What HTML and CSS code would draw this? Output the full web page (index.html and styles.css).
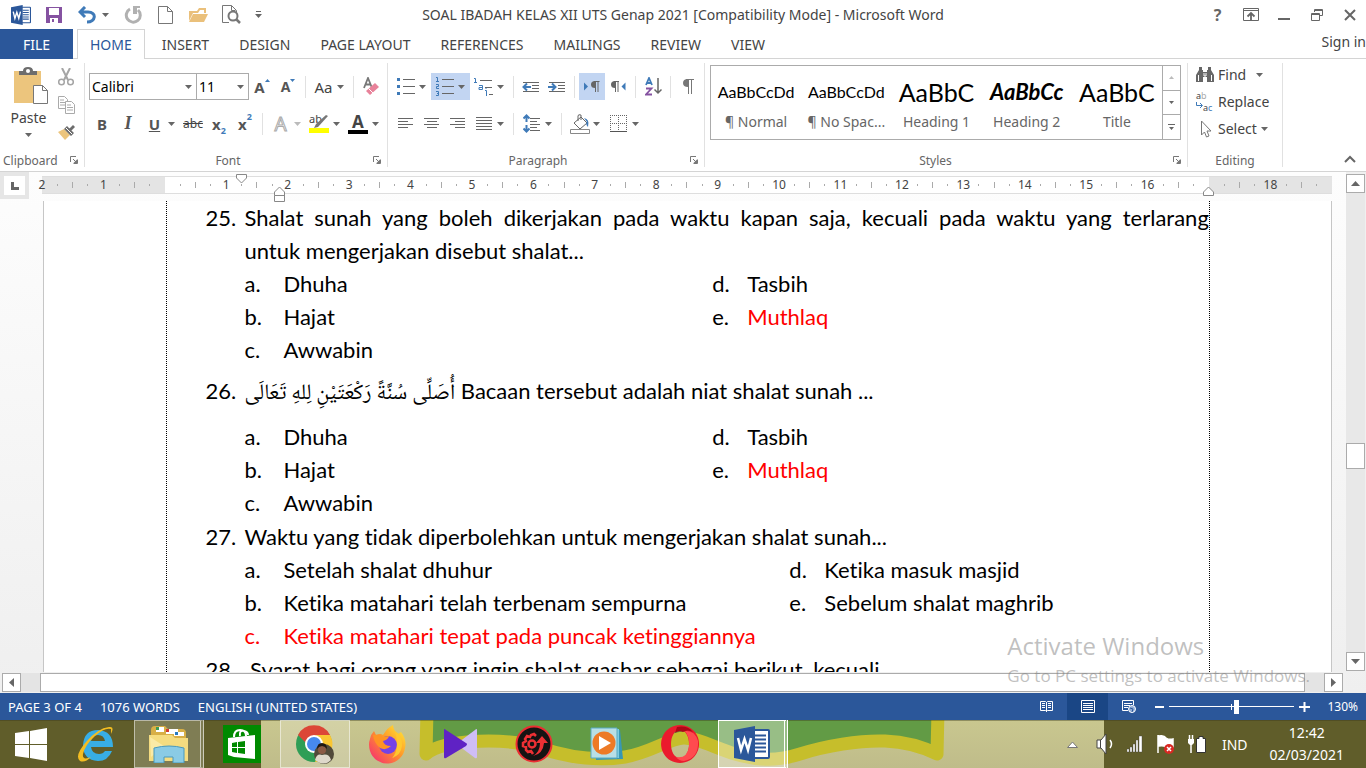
FILE: index.html
```html
<!DOCTYPE html>
<html lang="en">
  <head>
    <meta charset="UTF-8" />
    <meta name="viewport" content="width=device-width, initial-scale=1.0" />
    <title>SOAL IBADAH KELAS XII UTS Genap 2021 - Microsoft Word</title>
    <link rel="stylesheet" href="styles.css">
  </head>
  <body>
    <!-- Shared symbols -->
    <svg class="defs" width="0" height="0">
      <symbol id="caret" viewBox="0 0 7 4"><path d="M0 0h7L3.500 4z" fill="currentColor"/></symbol>
      <symbol id="launcher" viewBox="0 0 8 8"><path d="M.5 6V.5H6M3 3l3 3M7.500 3.500v4h-4" fill="none" stroke="#777"/><path d="M7 3.500V7H3.500z" fill="#777"/></symbol>
      <symbol id="word" viewBox="0 0 36 36">
        <rect x="19" y="4" width="16" height="28" rx="1" fill="#fff" stroke="#2b579a" stroke-width="2"/>
        <path d="M21 9.500h11M21 13.500h11M21 17.500h11M21 21.500h11M21 25.500h11" stroke="#2b579a" stroke-width="2"/>
        <path d="M0 4L21 0v36L0 32z" fill="#2b579a"/>
        <path d="M4 12l3 12 3.500-11L14 24l3-12" fill="none" stroke="#fff" stroke-width="2.500"/>
      </symbol>
    </svg>

    <!-- Title bar -->
    <header class="titlebar">
      <div class="quick">
        <button class="tb" aria-label="Word"><svg width="20" height="20"><use href="#word"/></svg></button>
        <button class="tb" aria-label="Save"><svg width="16" height="16"><path d="M0 0h16v16H0z" fill="#8552a1"/><path d="M3 1h10v7H3zM4 11h8v5H4z" fill="#fff"/><path d="M6 12h2v3H6z" fill="#8552a1"/></svg></button>
        <button class="tb tb-undo" aria-label="Undo"><svg width="18" height="18"><path d="M7 1L2 6l5 5M3 6h7c9 0 8 10-1 10" fill="none" stroke="#3f7ab8" stroke-width="3"/></svg><svg width="7" height="4" class="caret"><use href="#caret"/></svg></button>
        <button class="tb" aria-label="Repeat"><svg width="18" height="18"><path d="M6 3a7 7 0 1 0 8 1" fill="none" stroke="#b1b1b1" stroke-width="3"/><path d="M9 0h7v2h-3v6H9z" fill="#b1b1b1"/></svg></button>
        <button class="tb" aria-label="New"><svg width="16" height="18"><path d="M.5.5h9l5 5v12H.5zM9.500.5v5h5" fill="#fff" stroke="#777"/></svg></button>
        <button class="tb" aria-label="Open"><svg width="19" height="16"><path d="M0 14V4h8l2-3h7v5h-2V3h-4L9 6H4z" fill="#eac07b"/><path d="M4 7h15l-4 8H0z" fill="#eac07b"/></svg></button>
        <button class="tb" aria-label="Print preview"><svg width="19" height="19"><path d="M7 17.500H.5V.5h9l5 5v2M9.500.5v5h4" fill="none" stroke="#777"/><circle cx="11" cy="11" r="4.500" fill="#fff" stroke="#777" stroke-width="2"/><path d="M14 14l4 4" stroke="#777" stroke-width="2.500"/></svg></button>
        <button class="tb tb-small" aria-label="Customize"><svg width="7" height="8" class="caret"><path d="M1 0h5v1H1zM0 3h7L3.500 7z" fill="currentColor"/></svg></button>
      </div>
      <h1 class="doc-title">SOAL IBADAH KELAS XII UTS Genap 2021 [Compatibility Mode] - Microsoft Word</h1>
      <div class="window-buttons">
        <button class="tb help" aria-label="Help">?</button>
        <button class="tb" aria-label="Ribbon options"><svg width="16" height="13"><path d="M.5.5h15v12H.5zM0 2.500h16" fill="none" stroke="#666"/><path d="M8 12V5M4.500 8.500L8 5l3.500 3.500" fill="none" stroke="#666" stroke-width="1.800"/></svg></button>
        <button class="tb" aria-label="Minimize"><svg width="12" height="12"><path d="M0 9h12v2H0z" fill="#666"/></svg></button>
        <button class="tb" aria-label="Restore"><svg width="12" height="12"><path d="M3.500 3V.5h8v6H9M3 1.500h9M.5 4.500h8v7h-8zM0 5.500h9" fill="none" stroke="#666"/></svg></button>
        <button class="tb" aria-label="Close"><svg width="12" height="12"><path d="M1 1l10 10M11 1L1 11" stroke="#666" stroke-width="2"/></svg></button>
      </div>
    </header>

    <!-- Tabs -->
    <nav class="tabs">
      <button class="tab tab-file">FILE</button>
      <button class="tab tab-active">HOME</button>
      <button class="tab">INSERT</button>
      <button class="tab">DESIGN</button>
      <button class="tab">PAGE LAYOUT</button>
      <button class="tab">REFERENCES</button>
      <button class="tab">MAILINGS</button>
      <button class="tab">REVIEW</button>
      <button class="tab">VIEW</button>
      <a href="#" class="signin">Sign in</a>
    </nav>

    <!-- Ribbon -->
    <section class="ribbon">
      <div class="group group-clipboard">
        <div class="clipboard">
          <button class="paste">
            <svg width="35" height="38"><path d="M0 4h27v32H0z" fill="#ecc57d"/><path d="M5 8V4h4q0-4 5-4t5 4h4v4z" fill="#6d6d6d"/><circle cx="14" cy="4" r="2" fill="#fff"/><path d="M19.500 18.500h9l5 5v13h-14z" fill="#fff" stroke="#777"/><path d="M28.500 18.500v5h5" fill="none" stroke="#777"/></svg>
            <span>Paste</span>
            <svg width="7" height="4" class="caret"><use href="#caret"/></svg>
          </button>
          <div class="clip-side">
            <button class="tool-small" aria-label="Cut"><svg width="16" height="18"><path d="M4 0l6 12M12 0L6 12" stroke="#a5a5a5" stroke-width="2"/><circle cx="3.500" cy="14" r="2.800" fill="none" stroke="#a5a5a5" stroke-width="1.500"/><circle cx="12.500" cy="14" r="2.800" fill="none" stroke="#a5a5a5" stroke-width="1.500"/></svg></button>
            <button class="tool-small" aria-label="Copy"><svg width="17" height="18"><path d="M.5.5h6l3 3v9h-9zM2 4h4M2 6.500h5M2 9h5" fill="#fff" stroke="#aaa"/><path d="M7.500 5.500h6l3 3v9h-9zM9 9h4M9 11.500h6M9 14h6" fill="#fff" stroke="#aaa"/></svg></button>
            <button class="tool-small" aria-label="Format Painter"><svg width="17" height="16"><path d="M0 7l6-3 6 6-5 5z" fill="#ecc57d"/><path d="M6 4l3-3 7 7-3 3zM11 4l4-4 2 2-4 4z" fill="#6d6d6d"/><path d="M8 3l6 6" stroke="#fff"/></svg></button>
          </div>
        </div>
        <div class="group-name">Clipboard<svg width="8" height="8" class="launcher"><use href="#launcher"/></svg></div>
      </div>

      <div class="group group-font">
        <div class="tools">
          <div class="combo combo-font"><select aria-label="Font"><option>Calibri</option></select><svg width="7" height="4" class="caret"><use href="#caret"/></svg></div>
          <div class="combo combo-size"><select aria-label="Font size"><option>11</option></select><svg width="7" height="4" class="caret"><use href="#caret"/></svg></div>
          <button class="tool glyph" aria-label="Grow font">A<svg width="5" height="18"><path d="M0 4h5L2.500 1z" fill="#3f7ab8"/></svg></button>
          <button class="tool glyph glyph-small" aria-label="Shrink font">A<svg width="5" height="18"><path d="M0 1h5L2.500 4z" fill="#3f7ab8"/></svg></button>
          <i class="sep"></i>
          <button class="split" aria-label="Change case"><span class="pic case">Aa</span><svg width="7" height="4" class="caret"><use href="#caret"/></svg></button>
          <i class="sep"></i>
          <button class="tool" aria-label="Clear formatting"><svg width="17" height="19"><path d="M1 11L5 1l4 10M2.500 7.500h5" fill="none" stroke="#777" stroke-width="1.800"/><path d="M3 14l9-8 4 4-9 8z" fill="#e8829a"/><path d="M5.500 11.500l4.500 4.500" stroke="#fff"/></svg></button>
        </div>
        <div class="tools">
          <button class="tool glyph" aria-label="Bold">B</button>
          <button class="tool glyph italic" aria-label="Italic">I</button>
          <button class="split" aria-label="Underline"><span class="pic glyph underline">U</span><svg width="7" height="4" class="caret"><use href="#caret"/></svg></button>
          <button class="tool strike" aria-label="Strikethrough">abc</button>
          <button class="tool glyph" aria-label="Subscript">x<sub>2</sub></button>
          <button class="tool glyph" aria-label="Superscript">x<sup>2</sup></button>
          <i class="sep"></i>
          <button class="split faded" aria-label="Text effects"><span class="pic effect">A</span><svg width="7" height="4" class="caret"><use href="#caret"/></svg></button>
          <button class="split" aria-label="Highlight"><span class="pic marker">ab<svg width="20" height="19"><path d="M19 2L9 13l-4 1 2-4L17 1z" fill="#777"/><path d="M0 14h20v5H0z" fill="#ff0"/></svg></span><svg width="7" height="4" class="caret"><use href="#caret"/></svg></button>
          <button class="split" aria-label="Font color"><span class="pic color">A</span><svg width="7" height="4" class="caret"><use href="#caret"/></svg></button>
        </div>
        <div class="group-name">Font<svg width="8" height="8" class="launcher"><use href="#launcher"/></svg></div>
      </div>

      <div class="group group-paragraph">
        <div class="tools">
          <button class="split" aria-label="Bullets"><span class="pic"><svg width="18" height="17"><path d="M6 1.500h12M6 8.500h12M6 15.500h12" stroke="#666"/><path d="M0 0h3v3H0zM0 7h3v3H0zM0 14h3v3H0z" fill="#3f7ab8"/></svg></span><svg width="7" height="4" class="caret"><use href="#caret"/></svg></button>
          <button class="split on" aria-label="Numbering"><span class="pic"><svg width="18" height="19"><path d="M6 2.500h12M6 9.500h12M6 16.500h12" stroke="#666"/><path d="M0 .5h1.500V5M0 4.500h3M0 7.500h2.500v2H.5v2H3M0 14.500h2.500v4H0M1 16.500h1.500" fill="none" stroke="#3f7ab8"/></svg></span><svg width="7" height="4" class="caret"><use href="#caret"/></svg></button>
          <button class="split" aria-label="Multilevel list"><span class="pic"><svg width="19" height="18"><path d="M6 2.500h12M11 9.500h7M15 16.500h4" stroke="#666"/><path d="M0 .5h1.500V5M0 4.500h3M5 7.500h3.500v4H5v-2h3M11 12.500h1.500V18M12 10v1" fill="none" stroke="#3f7ab8"/></svg></span><svg width="7" height="4" class="caret"><use href="#caret"/></svg></button>
          <i class="sep"></i>
          <button class="tool" aria-label="Decrease indent"><svg width="18" height="12"><path d="M1 1.500h16M10 4.500h7M10 7.500h7M1 10.500h16" stroke="#666"/><path d="M9 6H2M5 2.500L1.500 6 5 9.500" fill="none" stroke="#3f7ab8" stroke-width="2"/></svg></button>
          <button class="tool" aria-label="Increase indent"><svg width="18" height="12"><path d="M1 1.500h16M10 4.500h7M10 7.500h7M1 10.500h16" stroke="#666"/><path d="M0 6h7M4 2.500L7.500 6 4 9.500" fill="none" stroke="#3f7ab8" stroke-width="2"/></svg></button>
          <i class="sep"></i>
          <button class="tool on" aria-label="Left-to-right"><svg width="16" height="12"><path d="M0 1.500v8L4 5.500z" fill="#3f7ab8"/><path d="M15.500.5H10M11.500 1v10M14 1v10" fill="none" stroke="#666"/><path d="M11 0v7Q7 7 7 3.500T11 0z" fill="#666"/></svg></button>
          <button class="tool" aria-label="Right-to-left"><svg width="16" height="12"><path d="M15.500 1.500v8l-4-4z" fill="#3f7ab8"/><path d="M9 .5H4M5.500 1v10M8 1v10" fill="none" stroke="#666"/><path d="M5 0v7Q1 7 1 3.500T5 0z" fill="#666"/></svg></button>
          <i class="sep"></i>
          <button class="tool" aria-label="Sort"><svg width="17" height="19"><path d="M1 8L4 1l3 7M2 6h4" fill="none" stroke="#3f7ab8" stroke-width="1.800"/><path d="M1 11.500h5.500L1 17.500h6" fill="none" stroke="#8552a1" stroke-width="1.800"/><path d="M13 1v15M9.500 12.500L13 16l3.500-3.500" fill="none" stroke="#666" stroke-width="1.500"/></svg></button>
          <i class="sep"></i>
          <button class="tool" aria-label="Show marks"><svg width="12" height="15"><path d="M12 .5H4M6.500 1v14M9.500 1v14" fill="none" stroke="#777"/><path d="M6 0v8Q1 8 1 4t5-4z" fill="#777"/></svg></button>
        </div>
        <div class="tools">
          <button class="tool" aria-label="Align left"><svg width="15" height="11"><path d="M0 .5h15M0 3.500h10M0 6.500h15M0 9.500h10" stroke="#666"/></svg></button>
          <button class="tool" aria-label="Center"><svg width="15" height="11"><path d="M0 .5h15M3 3.500h10M0 6.500h15M3 9.500h10" stroke="#666"/></svg></button>
          <button class="tool" aria-label="Align right"><svg width="15" height="11"><path d="M0 .5h15M5 3.500h10M0 6.500h15M5 9.500h10" stroke="#666"/></svg></button>
          <button class="split" aria-label="Justify"><span class="pic"><svg width="16" height="14"><path d="M0 .5h16M0 3.500h16M0 6.500h16M0 9.500h16M0 12.500h16" stroke="#666"/></svg></span><svg width="7" height="4" class="caret"><use href="#caret"/></svg></button>
          <i class="sep"></i>
          <button class="split" aria-label="Line spacing"><span class="pic"><svg width="18" height="19"><path d="M7 4.500h10M7 7.500h7M7 10.500h10M7 13.500h7M7 16.500h10" stroke="#666"/><path d="M3.500 8V2M.5 4.500l3-3 3 3M3.500 11v6M.5 14.500l3 3 3-3" fill="none" stroke="#3f7ab8" stroke-width="2"/></svg></span><svg width="7" height="4" class="caret"><use href="#caret"/></svg></button>
          <i class="sep"></i>
          <button class="split" aria-label="Shading"><span class="pic"><svg width="20" height="20"><path d="M4 9l7-6 6 6-7 6zM8 7V2q0-2 3-1v5" fill="none" stroke="#666"/><path d="M14 4q6 1 4 9-3-3-1-5z" fill="#3f7ab8"/><path d="M.5 15.500h19v4H.5z" fill="#fff" stroke="#888"/></svg></span><svg width="7" height="4" class="caret"><use href="#caret"/></svg></button>
          <button class="split" aria-label="Borders"><span class="pic"><svg width="17" height="17"><path d="M0 .5h17M0 8.500h17M.5 0v16M8.500 0v16M16.500 0v16" stroke="#666" stroke-dasharray="1 1"/><path d="M0 16.500h17" stroke="#555"/></svg></span><svg width="7" height="4" class="caret"><use href="#caret"/></svg></button>
        </div>
        <div class="group-name">Paragraph<svg width="8" height="8" class="launcher"><use href="#launcher"/></svg></div>
      </div>

      <div class="group group-styles">
        <div class="gallery">
          <button class="style-item"><span class="sample">AaBbCcDd</span><span>¶ Normal</span></button>
          <button class="style-item"><span class="sample">AaBbCcDd</span><span>¶ No Spac...</span></button>
          <button class="style-item"><span class="sample sample-big">AaBbC</span><span>Heading 1</span></button>
          <button class="style-item"><span class="sample sample-italic">AaBbCc</span><span>Heading 2</span></button>
          <button class="style-item"><span class="sample sample-big">AaBbC</span><span>Title</span></button>
          <div class="gallery-nav">
            <button aria-label="Previous"><svg width="5" height="3"><path d="M0 3h5L2.500 0z" fill="#bbb"/></svg></button>
            <button aria-label="Next"><svg width="5" height="3"><path d="M0 0h5L2.500 3z" fill="#666"/></svg></button>
            <button aria-label="More"><svg width="7" height="6"><path d="M0 0h7v1H0zM1 3h5L3.500 6z" fill="#666"/></svg></button>
          </div>
        </div>
        <div class="group-name">Styles<svg width="8" height="8" class="launcher"><use href="#launcher"/></svg></div>
      </div>

      <div class="group group-editing">
        <div class="edit-list">
          <button class="edit"><svg width="18" height="16"><path d="M0 15V8l3-5V0h3v3h1v12zM18 15V8l-3-5V0h-3v3h-1v12zM7 5h4v5H7z" fill="#666"/><path d="M2.500 8v6M15.500 8v6M8 6v3h2V6" stroke="#fff" fill="none"/></svg>Find<svg width="7" height="4" class="caret caret-far"><use href="#caret"/></svg></button>
          <button class="edit"><span class="replace-pic"><span>a<i>b</i></span><span class="replace-to"><svg width="7" height="7"><path d="M.5 0v3.500H6M4 1l2.500 2.500L4 6" fill="none" stroke="#3f7ab8"/></svg>a<b>c</b></span></span>Replace</button>
          <button class="edit"><svg width="18" height="18"><path d="M5.500 1v14l3-3 2 5 2.500-1-2-5h4z" fill="#fff" stroke="#777"/></svg>Select<svg width="7" height="4" class="caret"><use href="#caret"/></svg></button>
        </div>
        <div class="group-name">Editing</div>
      </div>
      <button class="collapse" aria-label="Collapse ribbon"><svg width="12" height="8"><path d="M1 7l5-5 5 5" fill="none" stroke="#666" stroke-width="2"/></svg></button>
    </section>

    <!-- Document area -->
    <main class="workspace">
      <div class="editor">
        <div class="ruler-row">
          <button class="tab-stop" aria-label="Tab stop"><svg width="8" height="8"><path d="M1.500 0v6.500H8" fill="none" stroke="#666" stroke-width="3"/></svg></button>
          <div class="ruler">
            <div class="cm off"><span>2</span></div><div class="cm off"><span>1</span></div>
            <div class="cm"></div><div class="cm"><span>1</span></div><div class="cm"><span>2</span></div><div class="cm"><span>3</span></div>
            <div class="cm"><span>4</span></div><div class="cm"><span>5</span></div><div class="cm"><span>6</span></div><div class="cm"><span>7</span></div>
            <div class="cm"><span>8</span></div><div class="cm"><span>9</span></div><div class="cm"><span>10</span></div><div class="cm"><span>11</span></div>
            <div class="cm"><span>12</span></div><div class="cm"><span>13</span></div><div class="cm"><span>14</span></div><div class="cm"><span>15</span></div>
            <div class="cm"><span>16</span></div><div class="cm off"></div><div class="cm off"><span>18</span></div>
            <svg class="mark mark-first" width="11" height="10"><path d="M.5.5h10V4l-5 5-5-5z" fill="#fff" stroke="#888"/></svg>
            <svg class="mark mark-left" width="11" height="16"><path d="M.5 9.500V6l5-5 5 5v9.500H.5zM.5 9.500h10" fill="#fff" stroke="#888"/></svg>
            <svg class="mark mark-right" width="11" height="10"><path d="M.5 9.500V6l5-5 5 5v3.500z" fill="#fff" stroke="#888"/></svg>
          </div>
        </div>
        <div class="canvas">
          <article class="page">
            <div class="page-text">
              <section class="question">
                <span class="number">25.</span>
                <p class="stem"><span class="full-line">Shalat sunah yang boleh dikerjakan pada waktu kapan saja, kecuali pada waktu yang terlarang</span> untuk mengerjakan disebut shalat...</p>
                <ul class="answers">
                  <li><span>a.</span>Dhuha</li><li><span>b.</span>Hajat</li><li><span>c.</span>Awwabin</li>
                  <li><span>d.</span>Tasbih</li><li><span>e.</span><mark>Muthlaq</mark></li>
                </ul>
              </section>
              <section class="question">
                <span class="number number-arabic">26.</span>
                <p class="stem stem-arabic"><bdo lang="ar" dir="rtl">أُصَلِّى سُنَّةً رَكْعَتَيْنِ لِلهِ تَعَالَى</bdo> Bacaan tersebut adalah niat shalat sunah ...</p>
                <ul class="answers">
                  <li><span>a.</span>Dhuha</li><li><span>b.</span>Hajat</li><li><span>c.</span>Awwabin</li>
                  <li><span>d.</span>Tasbih</li><li><span>e.</span><mark>Muthlaq</mark></li>
                </ul>
              </section>
              <section class="question">
                <span class="number">27.</span>
                <p class="stem">Waktu yang tidak diperbolehkan untuk mengerjakan shalat sunah...</p>
                <ul class="answers answers-wide">
                  <li><span>a.</span>Setelah shalat dhuhur</li><li><span>b.</span>Ketika matahari telah terbenam sempurna</li>
                  <li class="key"><span>c.</span>Ketika matahari tepat pada puncak ketinggiannya</li>
                  <li><span>d.</span>Ketika masuk masjid</li><li><span>e.</span>Sebelum shalat maghrib</li>
                </ul>
              </section>
              <section class="question">
                <span class="number">28.</span>
                <p class="stem">&nbsp;Syarat bagi orang yang ingin shalat qashar sebagai berikut, kecuali...</p>
              </section>
            </div>
          </article>
        </div>
      </div>
      <div class="vscroll">
        <button aria-label="Scroll up"><svg width="9" height="5"><path d="M0 5h9L4.500 0z" fill="#666"/></svg></button>
        <div class="vtrack"><div class="vthumb"></div></div>
        <button aria-label="Scroll down"><svg width="9" height="5"><path d="M0 0h9L4.500 5z" fill="#666"/></svg></button>
      </div>
      <div class="hscroll">
        <button aria-label="Scroll left"><svg width="5" height="9"><path d="M5 0v9L0 4.500z" fill="#666"/></svg></button>
        <div class="htrack"><div class="hthumb"></div></div>
        <button aria-label="Scroll right"><svg width="5" height="9"><path d="M0 0v9l5-4.500z" fill="#666"/></svg></button>
      </div>
      <div class="watermark"><strong>Activate Windows</strong><span>Go to PC settings to activate Windows.</span></div>
    </main>

    <!-- Status bar -->
    <footer class="status">
      <span>PAGE 3 OF 4</span>
      <span>1076 WORDS</span>
      <span>ENGLISH (UNITED STATES)</span>
      <div class="views">
        <button class="view" aria-label="Read mode"><svg width="13" height="13"><path d="M.5 1.500h5l1 1 1-1h5v9h-5l-1 1-1-1h-5zM6.500 2v10M2 3.500h3M2 5.500h3M2 7.500h3M8 3.500h3M8 5.500h3M8 7.500h3" fill="none" stroke="#fff"/></svg></button>
        <button class="view view-on" aria-label="Print layout"><svg width="14" height="13"><path d="M.5.5h13v12H.5zM2 3.500h10M2 5.500h10M2 7.500h10M2 9.500h10" fill="none" stroke="#fff"/></svg></button>
        <button class="view" aria-label="Web layout"><svg width="14" height="13"><path d="M6 10.500H.5V.5h11V5M2 3.500h8M2 5.500h6M2 7.500h4" fill="none" stroke="#fff"/><circle cx="10" cy="9" r="3.500" fill="#8fabd6" stroke="#fff"/><path d="M8 8l3 1-1 3" stroke="#2b579a" fill="none"/></svg></button>
        <button class="zoom-btn" aria-label="Zoom out"><svg width="9" height="10"><path d="M0 5h9" stroke="#fff" stroke-width="2"/></svg></button>
        <input class="zoom" type="range" min="0" max="100" value="54" aria-label="Zoom">
        <button class="zoom-btn" aria-label="Zoom in"><svg width="11" height="10"><path d="M0 5h11M5.500 0v10" stroke="#fff" stroke-width="2"/></svg></button>
        <span class="percent">130%</span>
      </div>
    </footer>

    <!-- Taskbar -->
    <div class="taskbar">
      <svg class="wallpaper" viewBox="0 0 1366 48" preserveAspectRatio="none">
        <defs><linearGradient id="sand" x2="0" y2="1"><stop offset="0" stop-color="#c9c78f"/><stop offset="1" stop-color="#bfbc8a"/></linearGradient></defs>
        <path d="M0 0h1366v48H0z" fill="#605d2a"/>
        <path d="M261 0h843v48H261z" fill="url(#sand)"/>
        <path d="M427-10L426 34C445 18 510 18 540 28S600 41 625 37 670 18 684 18 715 28 735 34 775 42 800 34 860 20 885 21 925 28 937 34L938-10z" fill="#629b45" stroke="#c6be2b" stroke-width="13" stroke-linejoin="round"/>
        <path d="M0 .5h1366" stroke="#3b3a1c" opacity=".4"/>
      </svg>
      <button class="start" aria-label="Start"><svg width="32" height="33"><path d="M0 5l14-2v13H0zM15 3l17-3v16H15zM0 17h14v13L0 28zM15 17h17v16l-17-3z" fill="#fff"/></svg></button>
      <button class="app" aria-label="Internet Explorer"><svg width="40" height="38"><path d="M37 22H15q1 7 8 7 4 0 6-3h7q-4 10-14 10Q7 35 7 20 8 5 22 5q15 1 15 17zM15 16h14q-1-6-7-6t-7 6z" fill="#38aee5"/><path d="M35 9Q39 1 33 2 22 3 10 17T4 36q5 2 11-4-9 4-8-3Q9 20 19 11T35 4z" fill="#f3bd22"/></svg></button>
      <button class="app open stacked" aria-label="File Explorer"><svg width="40" height="38"><path d="M3 5q0-4 4-4h10l3 3h14q4 0 4 4v26H3z" fill="#d8af46"/><path d="M8 2h8v5H8zM18 4h12v5H18zM26 7h10v4H26z" fill="#fff"/><path d="M8 2h3v3H8z" fill="#3b9b55"/><path d="M18 4h3v3h-3z" fill="#d53d33"/><path d="M27 7h3v3h-3z" fill="#287bc1"/><path d="M1 10h23l3 3h13v23H1z" fill="#f5dc80"/><path d="M2 12l14 9L3 32z" fill="#fff4bf" opacity=".6"/><path d="M6 23q15-4 30 0v15H25v-6H16v6H6z" fill="#8acbe5" stroke="#4999bd"/></svg></button>
      <button class="app app-store" aria-label="Store"><svg width="38" height="38"><path d="M0 0h38v38H0z" fill="#008a00"/><path d="M5 13l27-3v24l-21-2-6-2z" fill="#fff"/><path d="M11 12q0-7 6-7t6 6M17 11q-1-6 4-5 4 1 4 4" fill="none" stroke="#fff" stroke-width="2"/><path d="M9 18l5-1v5H9zM15 17l7-1v6h-7zM9 23h5v5l-5-1zM15 23h7v6l-7-1z" fill="#008a00"/></svg></button>
      <button class="app open" aria-label="Chrome"><svg width="40" height="40"><circle cx="19" cy="20" r="18" fill="#2f9e56"/><path d="M3 11A18 18 0 0 1 35 11L27 20H12z" fill="#dc4637"/><path d="M20 11h15A18 18 0 0 1 20 38L27 23z" fill="#f9c633"/><circle cx="19" cy="20" r="9" fill="#fff"/><circle cx="19" cy="20" r="7" fill="#4789ef"/><circle cx="29" cy="30" r="10" fill="#514a3a"/><circle cx="27" cy="26" r="4" fill="#8a5a45"/><path d="M22 25q0-6 5-6t5 6q-2-3-5-3t-5 3z" fill="#1f1712"/><path d="M20 36q2-7 7-5 7-2 9 5-7 7-16 0z" fill="#ded8ca"/></svg></button>
      <button class="app" aria-label="Firefox"><svg width="40" height="40"><defs><linearGradient id="fox" x1="1" x2="0" y2="1"><stop offset="0" stop-color="#fff13a"/><stop offset=".45" stop-color="#ff9928"/><stop offset="1" stop-color="#f5207b"/></linearGradient></defs><path d="M2 15q1-5 4-8l2 4q4-2 7 0 5-8 10-10 0 5 5 9l3-2q6 8 4 16a18 18 0 0 1-35 3Q0 20 2 15z" fill="url(#fox)"/><circle cx="20" cy="21" r="9" fill="#7542e5"/><path d="M5 11q6-1 10 2l6-1q-1 4-6 5 1 5 8 5-5 5-11 2-6-5-7-13z" fill="#ff9423"/><path d="M27 7q8 5 7 15-1 9-10 12 8-8 3-27z" fill="#ffc82f"/></svg></button>
      <button class="app" aria-label="Media player"><svg width="36" height="30"><path d="M34 1v27q0 2-2 1L16 17q-2-2 0-4L32 1q2-2 2 0z" fill="#cfbdf6"/><path d="M1 1v27q0 2 2 1l20-12q2-2 0-3L3 1Q1-1 1 1z" fill="#5f22c4"/></svg></button>
      <button class="app" aria-label="Driver Booster"><svg width="38" height="38"><circle cx="19" cy="19" r="17.500" fill="#151313" stroke="#ec2d32" stroke-width="2"/><path d="M21 11l-2-2-3 1-1 2-3-1-2 3 1 2-3 2v3l3 1 0 3 2 2 3-1 2 3" fill="none" stroke="#ed3034" stroke-width="2.500"/><circle cx="17" cy="19" r="3.500" fill="none" stroke="#ed3034" stroke-width="2.500"/><path d="M18 31q7-4 7-13h-4l6-7 6 7h-4q-1 11-11 13z" fill="#ed3034"/></svg></button>
      <button class="app" aria-label="Windows Media Player"><svg width="34" height="34"><path d="M5 1l25 2 3 29-27 1z" fill="#3897b5"/><path d="M3 2h26v29H3z" fill="#7dcbe0"/><path d="M1 1h26v30H1z" fill="#b8dfe6" stroke="#59aac1"/><circle cx="14" cy="16" r="11.500" fill="#ed7a26"/><path d="M9 9v14l12-7z" fill="#fff"/></svg></button>
      <button class="app" aria-label="Opera"><svg width="40" height="40"><path fill-rule="evenodd" d="M20 1a19 19 0 1 0 .1 0zm0 5c6 0 9 7 9 14s-3 14-9 14-9-7-9-14 3-14 9-14z" fill="#eb1b2d"/><path d="M25 7q10-1 13 10 1 17-14 20-5 0-8-4 11 2 13-10 1-10-4-16z" fill="#ff4b4f"/><path d="M17 3q10-2 16 5-6-3-10 0-4-2-8 1z" fill="#ad0817"/></svg></button>
      <button class="app open stacked app-word" aria-label="Word"><svg width="36" height="36"><use href="#word"/></svg></button>
      <div class="tray">
        <button class="tray-more" aria-label="Hidden icons"><svg width="11" height="7"><path d="M.5 6.500L5.500 1l5 5.500z" fill="#fff" stroke="#777"/></svg></button>
        <svg width="18" height="20"><path d="M1 6h4l5-6v20l-5-6H1z" fill="#fff" stroke="#444"/><path d="M4.500 6v8" stroke="#444"/><path d="M14 6q3 4 0 8" fill="none" stroke="#fff" stroke-width="1.500"/></svg>
        <svg width="16" height="18"><path d="M0 14h2v3H0zM3 12h2v5H3zM6 9h2v8H6zM9 5h2v12H9zM12 1h3v16h-3z" fill="#fff" stroke="#444" stroke-width=".4"/></svg>
        <svg width="19" height="19"><path d="M2 0v18M3 1q5-1 7 2 3 2 7 1v8q-5 2-7 0-3-2-7-1z" fill="#fff" stroke="#fff" stroke-width="1.500"/><circle cx="13" cy="14" r="5" fill="#d92822"/><path d="M11 12l4 4M15 12l-4 4" stroke="#fff" stroke-width="1.500"/></svg>
        <svg width="18" height="19"><path d="M1.500 0v4M4.500 0v4M3 9v9" stroke="#fff" stroke-width="1.500"/><path d="M0 4h6v4L4 10H2L0 8z" fill="#fff"/><path d="M8.500 3.500H11v-2h4v2h2.500v14h-9z" fill="#fff" stroke="#333"/></svg>
        <button class="lang">IND</button>
        <button class="clock"><span>12:42</span><span>02/03/2021</span></button>
      </div>
    </div>
  </body>
</html>
```
FILE: styles.css
```css
* {
  box-sizing: border-box;
}

body {
  margin: 0;
  height: 100vh;
  display: flex;
  flex-direction: column;
  overflow: hidden;
  font-family: "Noto Sans", "Open Sans", sans-serif;
  font-size: 14px;
  color: #444;
  background: #fff;
}

button {
  font: inherit;
  color: inherit;
  padding: 0;
  border: 0;
  background: none;
}

svg {
  display: block;
  flex: none;
}

.defs {
  position: absolute;
}

.caret {
  color: #666;
}

/* Title bar */
.titlebar {
  display: grid;
  grid-template-columns: 1fr auto 1fr;
  align-items: center;
  height: 29px;
  flex: none;
}

.quick,
.window-buttons {
  display: flex;
  align-items: center;
}

.quick {
  padding-left: 4px;
}

.window-buttons {
  justify-content: flex-end;
}

.tb {
  display: flex;
  align-items: center;
  justify-content: center;
  width: 33px;
  height: 27px;
}

.tb-undo {
  width: 46px;
  gap: 6px;
}

.tb-small {
  width: 20px;
}

.help {
  font-size: 16px;
  font-weight: bold;
  color: #666;
}

.doc-title {
  margin: 0;
  font-size: 14px;
  font-weight: normal;
}

/* Tabs */
.tabs {
  display: flex;
  height: 30px;
  flex: none;
  border-bottom: 1px solid #d4d4d4;
}

.tab {
  padding: 0 15px;
  height: 30px;
}

.tab-file {
  width: 73px;
  margin-right: 4px;
  color: #fff;
  background: #2b579a;
}

.tab-active {
  margin-right: 2px;
  color: #2b579a;
  padding: 0 12px;
  background: #fff;
  border: 1px solid #d4d4d4;
  border-bottom: 0;
}

.signin {
  margin-left: auto;
  padding-top: 3px;
  color: #444;
  text-decoration: none;
}

/* Ribbon */
.ribbon {
  display: flex;
  height: 113px;
  flex: none;
  padding: 4px 0;
  border-bottom: 1px solid #d4d4d4;
}

.group {
  position: relative;
  display: flex;
  flex-direction: column;
  border-right: 1px solid #e1e1e1;
}

.group-name {
  display: flex;
  align-items: center;
  justify-content: center;
  height: 14px;
  margin-top: auto;
  padding-right: 20px;
  font-size: 12px;
  color: #666;
}

.launcher {
  position: absolute;
  right: 6px;
  bottom: 3px;
}

.group-clipboard {
  width: 85px;
}

.group-clipboard .group-name {
  justify-content: flex-start;
  padding: 0 0 0 3px;
}

.clipboard {
  display: flex;
}

.paste {
  display: flex;
  flex-direction: column;
  align-items: center;
  width: 57px;
  padding: 4px 0 0 6px;
}

.paste span {
  margin: 3px 6px 6px 0;
}

.paste .caret {
  margin-right: 6px;
}

.clip-side {
  display: flex;
  flex-direction: column;
}

.tool-small {
  display: flex;
  align-items: center;
  justify-content: center;
  width: 18px;
  height: 28px;
}

.group-font {
  width: 303px;
  padding: 10px 0 0 4px;
}

.tools {
  display: flex;
  align-items: center;
  height: 27px;
  margin-bottom: 10px;
}

.tool {
  display: flex;
  align-items: center;
  justify-content: center;
  width: 26px;
  height: 27px;
}

.split {
  display: flex;
  align-items: center;
  width: 39px;
  height: 27px;
}

.pic {
  position: relative;
  display: flex;
  align-items: center;
  justify-content: center;
  width: 27px;
}

.on {
  background: #c2d5f2;
}

.sep {
  width: 1px;
  height: 22px;
  margin: 0 4px;
  background: #e1e1e1;
}

.combo {
  display: flex;
  align-items: center;
  height: 27px;
  padding-right: 4px;
  border: 1px solid #ababab;
}

.combo select {
  flex: 1;
  min-width: 0;
  padding: 0 2px;
  border: 0;
  appearance: none;
  background: none;
  font: inherit;
  color: #000;
}

.combo-font {
  width: 108px;
}

.combo-size {
  width: 52px;
  border-left: 0;
}

.glyph {
  font-size: 15px;
  font-weight: bold;
  color: #555;
}

.glyph-small {
  font-size: 14px;
}

.italic {
  font-family: "Liberation Serif", serif;
  font-size: 18px;
  font-style: italic;
}

.underline {
  text-decoration: underline;
}

.glyph sub,
.glyph sup {
  font-size: 9px;
  color: #3f7ab8;
}

.glyph sub {
  align-self: flex-end;
}

.glyph sup {
  align-self: flex-start;
}

.strike {
  font-size: 12px;
  text-decoration: line-through;
}

.case {
  font-size: 15px;
}

.effect {
  font-size: 19px;
  color: #fff;
  -webkit-text-stroke: 1px #aaa;
}

.faded .caret {
  color: #bbb;
}

.marker {
  height: 20px;
  align-items: flex-start;
  justify-content: flex-start;
  padding-left: 3px;
  font-size: 11px;
  line-height: 9px;
}

.marker svg {
  position: absolute;
  left: 3px;
  top: 0;
}

.color {
  width: 20px;
  height: 20px;
  margin: 0 4px 0 3px;
  border-bottom: 4px solid #000;
  font-size: 17px;
  font-weight: bold;
  line-height: 16px;
}

.group-paragraph {
  width: 317px;
  padding: 10px 0 0 4px;
}

.group-styles {
  width: 483px;
  padding: 2px 6px 0 5px;
}

.gallery {
  display: flex;
  height: 75px;
  border: 1px solid #ababab;
}

.style-item {
  flex: 1;
  display: flex;
  flex-direction: column;
  align-items: center;
  padding-top: 9px;
  color: #666;
}

.sample {
  height: 37px;
  line-height: 34px;
  font-family: Lato, sans-serif;
  font-size: 16px;
  color: #000;
}

.sample-big {
  font-size: 25px;
}

.sample-italic {
  font-size: 22px;
  font-weight: bold;
  font-style: italic;
}

.gallery-nav {
  display: flex;
  flex-direction: column;
  width: 18px;
}

.gallery-nav button {
  flex: 1;
  display: flex;
  align-items: center;
  justify-content: center;
  border-left: 1px solid #ababab;
}

.gallery-nav button + button {
  border-top: 1px solid #ababab;
}

.group-editing {
  width: 95px;
}

.group-editing .group-name {
  padding: 0;
}

.edit-list {
  display: flex;
  flex-direction: column;
  margin-top: -2px;
  padding-left: 8px;
}

.edit {
  display: flex;
  align-items: center;
  gap: 4px;
  height: 27px;
}

.caret-far {
  margin-left: 6px;
}

.replace-pic {
  display: flex;
  flex-direction: column;
  align-items: flex-start;
  width: 18px;
  font-size: 9px;
  line-height: 12px;
}

.replace-pic i {
  font-style: normal;
  color: #aaa;
}

.replace-pic b {
  font-weight: normal;
  color: #3f7ab8;
}

.replace-to {
  display: flex;
}

.collapse {
  align-self: flex-end;
  margin: 0 10px 4px auto;
}

/* Workspace */
.workspace {
  position: relative;
  flex: 1;
  min-height: 0;
  display: grid;
  grid-template-columns: 1fr 20px;
  grid-template-rows: 1fr 21px;
  background: linear-gradient(#fdfdfd, #efefef);
}

.editor {
  display: flex;
  flex-direction: column;
  min-height: 0;
  padding-right: 14px;
}

.ruler-row {
  display: flex;
  height: 29px;
  flex: none;
}

.tab-stop {
  display: flex;
  align-items: center;
  justify-content: center;
  width: 29px;
  height: 27px;
  margin-right: 13px;
  background: #fff;
  border: 4px solid #e6e6e6;
}

.ruler {
  position: relative;
  flex: 1;
  display: flex;
  height: 18px;
  margin-top: 4px;
  border: solid #dedede;
  border-width: 1px 0;
}

.cm {
  flex: 1;
  background:
    linear-gradient(#aaa, #aaa) 25% 50% / 1px 2px no-repeat,
    linear-gradient(#aaa, #aaa) 50% 50% / 1px 6px no-repeat,
    linear-gradient(#aaa, #aaa) 75% 50% / 1px 2px no-repeat,
    #fff;
}

.cm.off {
  background-color: #e4e4e4;
}

.cm span {
  position: relative;
  display: block;
  width: 20px;
  margin-left: -10px;
  font-size: 12px;
  line-height: 16px;
  text-align: center;
}

.mark {
  position: absolute;
}

.mark-first {
  left: 15%;
  top: -3px;
}

.mark-left {
  left: 18%;
  top: 9px;
}

.mark-right {
  left: 90%;
  top: 9px;
}

.canvas {
  flex: 1;
  min-height: 0;
  overflow: hidden;
  padding-left: 43px;
}

.page {
  height: 100%;
  padding: 0 9.400% 0 9.500%;
  background: #fff;
  border: solid #c6c6c6;
  border-width: 0 1px;
}

.page-text {
  height: 100%;
  padding-left: 38px;
  border: dotted #000;
  border-width: 0 1px;
  font-family: Lato, Carlito, sans-serif;
  font-size: 22px;
  font-variant-ligatures: none;
  line-height: 33px;
  color: #000;
}

.question {
  display: grid;
  grid-template-columns: 39px 1fr;
  margin-bottom: 1px;
}

.stem {
  margin: 0;
}

.full-line {
  display: block;
  text-align: justify;
  text-align-last: justify;
}

.number-arabic,
.stem-arabic {
  line-height: 47px;
  height: 53px;
}

.stem-arabic bdo {
  font-family: "Noto Naskh Arabic", "Noto Sans Arabic", "DejaVu Sans", sans-serif;
  font-size: 22px;
  unicode-bidi: isolate;
}

.answers {
  grid-column: 2;
  display: grid;
  grid-auto-flow: column;
  grid-template-rows: repeat(3, 33px);
  grid-template-columns: 48.500% 1fr;
  margin: 0;
  padding: 0;
  list-style: none;
}

.answers-wide {
  grid-template-columns: 56.500% 1fr;
}

.answers li {
  display: flex;
}

.answers span {
  width: 39px;
}

.answers li:nth-child(n + 4) span {
  width: 35px;
}

.answers mark,
.key {
  color: #f00;
  background: none;
}

.vscroll,
.hscroll {
  display: flex;
  background: #f0f0f0;
}

.vscroll {
  flex-direction: column;
  padding: 2px 1px 1px 0;
}

.vscroll button,
.hscroll button {
  display: flex;
  align-items: center;
  justify-content: center;
  width: 19px;
  height: 19px;
  background: #fff;
  border: 1px solid #ababab;
}

.vtrack {
  flex: 1;
  padding-top: 250px;
  background: #e8e8e8;
}

.vthumb {
  height: 26px;
  background: #fff;
  border: 1px solid #ababab;
}

.hscroll {
  padding: 1px 3px 1px 2px;
}

.htrack {
  flex: 1;
  padding: 0 19px;
  background: #e4e4e4;
}

.hthumb {
  height: 19px;
  background: #fff;
  border: 1px solid #ababab;
}

.watermark {
  position: absolute;
  right: 56px;
  bottom: 5px;
  display: flex;
  flex-direction: column;
  color: rgba(130, 130, 130, 0.5);
  font-family: "Open Sans", sans-serif;
  font-size: 17px;
  line-height: 24px;
}

.watermark strong {
  font-size: 24px;
  font-weight: normal;
  line-height: 36px;
}

/* Status bar */
.status {
  display: flex;
  align-items: center;
  gap: 18px;
  height: 27px;
  flex: none;
  padding-left: 8px;
  font-size: 13px;
  color: #fff;
  background: #2b579a;
}

.views {
  display: flex;
  align-items: center;
  margin-left: auto;
  height: 27px;
}

.view {
  display: flex;
  align-items: center;
  justify-content: center;
  width: 41px;
  height: 27px;
}

.view-on {
  background: #1a4685;
}

.zoom-btn {
  display: flex;
  justify-content: center;
  width: 20px;
}

.zoom {
  width: 125px;
  height: 14px;
  margin: 0;
  appearance: none;
  background: linear-gradient(#fff, #fff) 50% 50% / 1px 6px no-repeat,
    linear-gradient(#fff, #fff) 0 50% / 100% 1px no-repeat;
}

.zoom::-webkit-slider-thumb {
  appearance: none;
  width: 5px;
  height: 14px;
  background: #fff;
}

.percent {
  width: 52px;
  padding-right: 8px;
  font-size: 12px;
  text-align: right;
}

/* Taskbar */
.taskbar {
  position: relative;
  display: flex;
  height: 48px;
  flex: none;
  color: #fff;
}

.wallpaper {
  position: absolute;
  width: 100%;
  height: 100%;
}

.taskbar button {
  position: relative;
  display: flex;
  align-items: center;
  justify-content: center;
}

.taskbar .start {
  width: 61px;
}

.taskbar .app {
  width: 70px;
  margin-right: 3px;
}

.taskbar .open {
  border: 1px solid rgba(255, 255, 255, 0.5);
  background: rgba(255, 255, 255, 0.2);
}

.taskbar .stacked {
  border-right: 4px double rgba(255, 255, 255, 0.6);
}

.taskbar .app-store {
  overflow: hidden;
}

.taskbar .app-word {
  border-color: #fff;
  background: rgba(255, 255, 255, 0.35);
}

.tray {
  position: relative;
  display: flex;
  align-items: center;
  gap: 13px;
  margin-left: auto;
  padding-right: 22px;
}

.tray-more {
  margin-right: 5px;
}

.taskbar .lang {
  margin: 0 9px 0 3px;
}

.taskbar .clock {
  flex-direction: column;
  line-height: 22px;
}
```
